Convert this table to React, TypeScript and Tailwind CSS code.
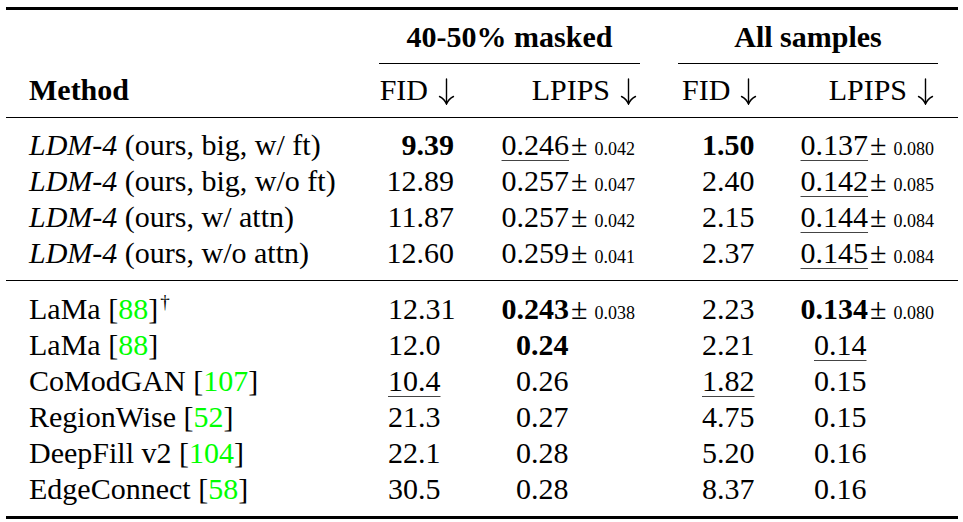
type Val = { v: string; bold?: boolean; u?: boolean; pm?: string };

type Row = {
  name: string;
  italic?: string;
  cite?: string;
  dagger?: boolean;
  cells: [Val, Val, Val, Val];
};

const ours: Row[] = [
  {
    name: " (ours, big, w/ ft)",
    italic: "LDM-4",
    cells: [
      { v: "9.39", bold: true },
      { v: "0.246", u: true, pm: "0.042" },
      { v: "1.50", bold: true },
      { v: "0.137", u: true, pm: "0.080" },
    ],
  },
  {
    name: " (ours, big, w/o ft)",
    italic: "LDM-4",
    cells: [
      { v: "12.89" },
      { v: "0.257", pm: "0.047" },
      { v: "2.40" },
      { v: "0.142", u: true, pm: "0.085" },
    ],
  },
  {
    name: " (ours, w/ attn)",
    italic: "LDM-4",
    cells: [
      { v: "11.87" },
      { v: "0.257", pm: "0.042" },
      { v: "2.15" },
      { v: "0.144", u: true, pm: "0.084" },
    ],
  },
  {
    name: " (ours, w/o attn)",
    italic: "LDM-4",
    cells: [
      { v: "12.60" },
      { v: "0.259", pm: "0.041" },
      { v: "2.37" },
      { v: "0.145", u: true, pm: "0.084" },
    ],
  },
];

const others: Row[] = [
  {
    name: "LaMa ",
    cite: "88",
    dagger: true,
    cells: [
      { v: "12.31" },
      { v: "0.243", bold: true, pm: "0.038" },
      { v: "2.23" },
      { v: "0.134", bold: true, pm: "0.080" },
    ],
  },
  {
    name: "LaMa ",
    cite: "88",
    cells: [{ v: "12.0" }, { v: "0.24", bold: true }, { v: "2.21" }, { v: "0.14", u: true }],
  },
  {
    name: "CoModGAN ",
    cite: "107",
    cells: [{ v: "10.4", u: true }, { v: "0.26" }, { v: "1.82", u: true }, { v: "0.15" }],
  },
  {
    name: "RegionWise ",
    cite: "52",
    cells: [{ v: "21.3" }, { v: "0.27" }, { v: "4.75" }, { v: "0.15" }],
  },
  {
    name: "DeepFill v2 ",
    cite: "104",
    cells: [{ v: "22.1" }, { v: "0.28" }, { v: "5.20" }, { v: "0.16" }],
  },
  {
    name: "EdgeConnect ",
    cite: "58",
    cells: [{ v: "30.5" }, { v: "0.28" }, { v: "8.37" }, { v: "0.16" }],
  },
];

const grid = "grid grid-cols-[373px_91px_170px_130px_188px]";

// math-style \downarrow
function Down() {
  return (
    <svg
      width="17"
      height="27"
      viewBox="0 0 17 27"
      className="inline-block ml-[10px] align-[-5px]"
      fill="none"
      stroke="black"
      strokeWidth="1.4"
      strokeLinecap="round"
    >
      <path d="M8.5 1 V25.5" />
      <path d="M1.5 18.5 Q6.5 21 8.5 26 Q10.5 21 15.5 18.5" />
    </svg>
  );
}

function Num({ val }: { val: Val }) {
  return (
    <span className="whitespace-nowrap">
      <span
        className={
          (val.bold ? "font-bold " : "") +
          (val.u ? "underline decoration-[1.3px] decoration-[#444] underline-offset-[5px]" : "")
        }
      >
        {val.v}
      </span>
      {val.pm && (
        <>
          <span className="ml-[2px]">±</span>
          <span className="ml-[7px] text-[18px]">{val.pm}</span>
        </>
      )}
    </span>
  );
}

function DataRow({ row, top }: { row: Row; top: boolean }) {
  const [a, b, c, d] = row.cells;
  return (
    <div className={`${grid} h-[36px] leading-[36px]`}>
      <div className="pl-[23px] whitespace-nowrap">
        {row.italic && <span className="italic">{row.italic}</span>}
        {row.name}
        {row.cite && (
          <>
            [<span className="text-[#00ff00]">{row.cite}</span>]
          </>
        )}
        {row.dagger && <span className="text-[19px] ml-[2px] relative top-[-11px]">†</span>}
      </div>
      <div className={top ? "text-right pr-[16px]" : "pl-[9px]"}>
        <Num val={a} />
      </div>
      <div className={b.pm ? "text-right pr-[5px]" : "pl-[46px]"}>
        <Num val={b} />
      </div>
      <div className="pl-[62px]">
        <Num val={c} />
      </div>
      <div className={d.pm ? "text-right pr-[24px]" : "pl-[44px]"}>
        <Num val={d} />
      </div>
    </div>
  );
}

export default function App() {
  return (
    <div className="w-[963px] h-[522px] bg-white pt-[7px] pl-[6px] text-black text-[30px] font-['Liberation_Serif','Times_New_Roman',serif]">
      <div className="w-[952px]">
        {/* top rule */}
        <div className="h-[2.5px] bg-black" />

        {/* group headers */}
        <div className={`${grid} h-[53px] leading-[36px] items-center pt-[1px] font-bold`}>
          <div />
          <div className="col-span-2 text-center">40-50% masked</div>
          <div className="col-span-2 text-center ml-[38px] mr-[20px]">All samples</div>
        </div>
        <div className={grid}>
          <div />
          <div className="col-span-2 h-px bg-black" />
          <div className="col-span-2 h-px bg-black ml-[38px] mr-[20px]" />
        </div>

        {/* column headers */}
        <div className={`${grid} h-[53px] leading-[36px] items-center whitespace-nowrap`}>
          <div className="pl-[23px] font-bold">Method</div>
          <div className="text-right pr-[15px]">
            FID<Down />
          </div>
          <div className="text-right pr-[3px]">
            LPIPS<Down />
          </div>
          <div className="pl-[42px]">
            FID<Down />
          </div>
          <div className="text-right pr-[24px]">
            LPIPS<Down />
          </div>
        </div>
        <div className="h-[1.5px] bg-black" />

        <div className="h-[8.5px]" />
        {ours.map((r, i) => (
          <DataRow key={i} row={r} top />
        ))}
        <div className="h-[9px]" />
        <div className="h-[1.5px] bg-black" />
        <div className="h-[9.5px]" />
        {others.map((r, i) => (
          <DataRow key={i} row={r} top={false} />
        ))}
        <div className="h-[9.5px]" />
        <div className="h-[2.5px] bg-black" />
      </div>
    </div>
  );
}
